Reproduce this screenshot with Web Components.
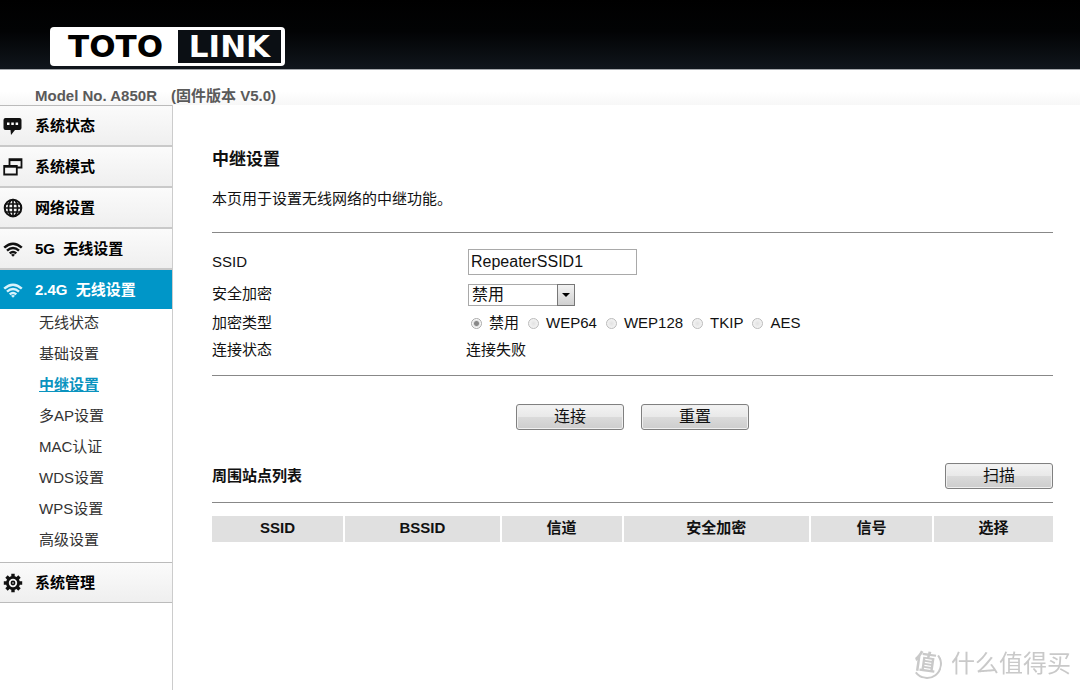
<!DOCTYPE html>
<html lang="zh-CN">
<head>
<meta charset="utf-8">
<title>TOTOLINK A850R</title>
<style>
  body {
    margin: 0;
    background: #fff;
    color: #111;
    font: 15px/20px "Liberation Sans", "Noto Sans CJK SC", sans-serif;
  }
</style>
</head>
<body>
<router-page></router-page>

<script>
const define = (name, html) => {
  const template = document.createElement('template');
  template.innerHTML = html;
  customElements.define(name, class extends HTMLElement {
    constructor() {
      super();
      this.attachShadow({ mode: 'open' }).append(template.content.cloneNode(true));
    }
  });
};

define('brand-logo', `
  <style>
    :host {
      display: inline-grid; grid-template-columns: 125px 103px; box-sizing: border-box;
      height: 39px; padding: 3px 4px 3px 3px;
      background: #fff; border-radius: 4px; text-align: center;
      font: bold 31px/33px "DejaVu Sans", sans-serif;
    }
    span { color: #000; }
    .link { color: #fff; background: #0b0f14; }
  </style>
  <span>TOTO</span><span class="link">LINK</span>`);

define('page-header', `
  <style>
    :host { display: block; }
    .bar {
      display: flex; align-items: flex-end; box-sizing: border-box; height: 70px; padding: 0 50px 3px;
      background: linear-gradient(#000 0, #020304 45%, #10161c 100%);
      border-bottom: 1px solid #a4a7ab;
    }
    .model {
      display: flex; gap: 14px; padding: 16px 35px 0; height: 19px;
      background: linear-gradient(#fff 60%, #f7f7f7);
      color: #5a5a5a; font-weight: bold; white-space: nowrap;
    }
  </style>
  <div class="bar"><brand-logo></brand-logo></div>
  <div class="model"><span>Model No. A850R</span><span>(固件版本 V5.0)</span></div>`);

define('nav-item', `
  <style>
    :host { display: block; border-bottom: 2px solid #c9c9c9; }
    a {
      display: flex; align-items: center; gap: 12px; height: 39px; padding-left: 3px;
      background: linear-gradient(#fbfbfb, #efefef);
      color: #000; font-weight: bold; text-decoration: none; white-space: pre;
    }
    ::slotted(svg) { width: 20px; height: 20px; flex: none; }
    :host([active]) { border-bottom: 0; }
    :host([active]) a { background: #0096c8; color: #fff; }
    :host([last]) { border-top: 1px solid #bbb; border-bottom: 1px solid #bbb; }
  </style>
  <a href="#"><slot name="icon"></slot><slot></slot></a>`);

define('sub-item', `
  <style>
    :host { display: block; }
    a { display: block; padding-left: 39px; line-height: 27px; color: #333; text-decoration: none; }
    :host([current]) a { color: #0a93bf; font-weight: bold; text-decoration: underline; }
  </style>
  <a href="#"><slot></slot></a>`);

define('side-nav', `
  <style>
    :host { display: block; box-sizing: border-box; border-right: 1px solid #ccc; }
    nav { border-top: 1px solid #bbb; }
    .sub { display: grid; gap: 4px; padding: 0 0 9px; }
  </style>
  <nav>
    <nav-item><svg slot="icon" viewBox="0 0 20 20"><path fill="#111" d="M2.500 2h14q2 0 2 2v8q0 2-2 2h-4.500l-4 5-.5-5h-5q-2 0-2-2V4q0-2 2-2z"/><path fill="#fff" d="M4 6.500h2.500V9H4zm4.300 0h2.500V9H8.300zm4.300 0h2.500V9h-2.500z"/></svg>系统状态</nav-item>
    <nav-item><svg slot="icon" viewBox="0 0 20 20" fill="#f7f7f7" stroke="#111" stroke-width="1.800"><path d="M6.500 2.200h12v8.300h-12z"/><path d="M6.500 3.200h12"/><path d="M1.200 8.800h12.600v8.700H1.200z"/><path d="M1.200 9.600h12.600" stroke-width="2.200"/></svg>系统模式</nav-item>
    <nav-item><svg slot="icon" viewBox="0 0 20 20"><circle cx="10" cy="10" r="9" fill="#f5f5f5"/><g fill="none" stroke="#111" stroke-width="1.700"><path d="M10 1v18M2 6h16M1 10h18M2 14h16"/><ellipse cx="10" cy="10" rx="4.600" ry="8.500"/><circle cx="10" cy="10" r="8.300" stroke-width="2"/></g></svg>网络设置</nav-item>
    <nav-item><svg slot="icon" viewBox="0 0 20 20" fill="none" stroke="#111" stroke-width="2.500"><path d="M1.200 8.600Q10 .8 18.800 8.600M4 11.600Q10 6.400 16 11.600M6.700 14.400Q10 11.700 13.300 14.400"/><path fill="#111" stroke="none" d="M8 15.800q2-1.400 4 0l-2 2z"/></svg>5G&nbsp; 无线设置</nav-item>
    <nav-item active><svg slot="icon" viewBox="0 0 20 20" fill="none" stroke="#d9f2fb" stroke-width="2.500"><path d="M1.200 8.600Q10 .8 18.800 8.600M4 11.600Q10 6.400 16 11.600M6.700 14.400Q10 11.700 13.300 14.400"/><path fill="#d9f2fb" stroke="none" d="M8 15.800q2-1.400 4 0l-2 2z"/></svg>2.4G&nbsp; 无线设置</nav-item>
    <div class="sub">
      <sub-item>无线状态</sub-item>
      <sub-item>基础设置</sub-item>
      <sub-item current>中继设置</sub-item>
      <sub-item>多AP设置</sub-item>
      <sub-item>MAC认证</sub-item>
      <sub-item>WDS设置</sub-item>
      <sub-item>WPS设置</sub-item>
      <sub-item>高级设置</sub-item>
    </div>
    <nav-item last><svg slot="icon" viewBox="0 0 20 20" fill="none" stroke="#111"><path stroke-width="3.400" d="M10 .8v4M10 15.200v4M.8 10h4M15.200 10h4M3.500 3.500l3 3M13.500 13.500l3 3M16.500 3.500l-3 3M6.500 13.500l-3 3"/><circle cx="10" cy="10" r="5.600" stroke-width="2.800"/><circle cx="10" cy="10" r="1.600" stroke-width="1.600"/></svg>系统管理</nav-item>
  </nav>`);

define('push-button', `
  <style>
    :host { display: inline-block; }
    button {
      display: block; box-sizing: border-box; width: 108px; height: 26px; padding: 0;
      border: 1px solid #808080; border-radius: 3px;
      background: linear-gradient(#f3f3f3, #e9e9e9 48%, #dadada 52%, #cdcdcd);
      box-shadow: inset 0 0 0 1px #f0f0f0;
      color: #111; font: inherit; font-size: 16px; line-height: 24px;
    }
  </style>
  <button type="button"><slot></slot></button>`);

define('repeater-form', `
  <style>
    :host { display: block; }
    form {
      display: grid; grid-template-columns: 254px 1fr; align-items: center; row-gap: 7px;
      padding: 16px 0 15px; border: solid #888; border-width: 1px 0;
    }
    input, select { font: inherit; font-size: 16px; color: #111; }
    .control { margin-left: 2px; }
    #ssid {
      display: block; box-sizing: border-box; width: 169px; height: 26px; padding: 0 2px;
      border: 1px solid #a9a9a9; border-radius: 0; background: #fff;
    }
    .pick { position: relative; width: 107px; height: 22px; margin-top: 2px; }
    select {
      appearance: none; display: block; box-sizing: border-box; width: 100%; height: 100%; padding: 0 3px;
      border: 1px solid #a9a9a9; border-radius: 0; background: #fff; line-height: 20px;
    }
    .arrow {
      position: absolute; top: 0; right: 0; box-sizing: border-box; width: 18px; height: 22px;
      border: 1px solid #777; background: linear-gradient(#f2f2f2, #d0d0d0); pointer-events: none;
    }
    .arrow svg { display: block; width: 16px; height: 20px; }
    .radios { display: flex; gap: 9px; padding-left: 3px; }
    .radios label { display: flex; align-items: center; gap: 7px; }
    .radios input {
      appearance: none; box-sizing: border-box; width: 11px; height: 11px; margin: 0;
      border: 1px solid #bbb; border-radius: 50%; background: radial-gradient(#e2e2e2, #fafafa);
    }
    .radios input:checked { background: radial-gradient(#888 0 2px, #ddd 3px, #fafafa 4px); border-color: #aaa; }
  </style>
  <form>
    <label for="ssid">SSID</label>
    <div class="control"><input id="ssid" type="text" value="RepeaterSSID1"></div>
    <label for="security">安全加密</label>
    <div class="control pick">
      <select id="security"><option>禁用</option></select>
      <span class="arrow"><svg viewBox="0 0 16 20"><path d="M4 8h8l-4 4z"/></svg></span>
    </div>
    <span id="kind">加密类型</span>
    <div class="control radios" role="radiogroup" aria-labelledby="kind">
      <label><input type="radio" name="kind" checked>禁用</label>
      <label><input type="radio" name="kind">WEP64</label>
      <label><input type="radio" name="kind">WEP128</label>
      <label><input type="radio" name="kind">TKIP</label>
      <label><input type="radio" name="kind">AES</label>
    </div>
    <label for="status">连接状态</label>
    <output id="status">连接失败</output>
  </form>`);

define('site-list', `
  <style>
    :host { display: block; }
    header {
      display: flex; justify-content: space-between; align-items: center;
      padding-bottom: 13px; border-bottom: 1px solid #888;
    }
    h2 { margin: 0; font-size: 15px; line-height: 20px; }
    table { width: 100%; margin-top: 13px; table-layout: fixed; border-collapse: separate; border-spacing: 0; }
    th { height: 26px; padding: 0; background: #e0e0e0; line-height: 24px; vertical-align: top; }
    th + th { border-left: 2px solid #fff; }
    .ssid { width: 15.6%; }
    .bssid { width: 18.6%; }
    .channel { width: 14.5%; }
    .security { width: 22.3%; }
    .signal { width: 14.6%; }
  </style>
  <header><h2>周围站点列表</h2><push-button>扫描</push-button></header>
  <table>
    <colgroup>
      <col class="ssid"><col class="bssid"><col class="channel"><col class="security"><col class="signal"><col>
    </colgroup>
    <thead><tr>
      <th scope="col">SSID</th>
      <th scope="col">BSSID</th>
      <th scope="col">信道</th>
      <th scope="col">安全加密</th>
      <th scope="col">信号</th>
      <th scope="col">选择</th>
    </tr></thead>
  </table>`);

define('site-watermark', `
  <style>
    :host {
      position: fixed; right: 9px; bottom: 10px; display: flex; align-items: center; gap: 9px;
      color: #c9c9c9; font-size: 24px; line-height: 32px; pointer-events: none;
    }
    .seal {
      box-sizing: border-box; width: 30px; height: 30px; border: 2px solid #c9c9c9; border-radius: 50%;
      border-left-color: transparent; border-top-color: transparent;
      font-size: 22px; font-weight: bold; line-height: 24px; rotate: 8deg;
    }
  </style>
  <span class="seal">值</span><span>什么值得买</span>`);

define('router-page', `
  <style>
    :host { display: flex; flex-direction: column; min-height: 100vh; }
    .body { flex: 1; display: grid; grid-template-columns: 173px 1fr; }
    main { padding: 45px 27px 0 39px; }
    h1 { margin: 0; font-size: 17px; line-height: 20px; }
    p { margin: 19px 0 23px; line-height: 20px; }
    .actions { display: flex; justify-content: center; gap: 17px; padding: 28px 0 33px; }
  </style>
  <page-header></page-header>
  <div class="body">
    <side-nav></side-nav>
    <main>
      <h1>中继设置</h1>
      <p>本页用于设置无线网络的中继功能。</p>
      <repeater-form></repeater-form>
      <div class="actions"><push-button>连接</push-button><push-button>重置</push-button></div>
      <site-list></site-list>
    </main>
  </div>
  <site-watermark></site-watermark>`);
</script>
</body>
</html>
